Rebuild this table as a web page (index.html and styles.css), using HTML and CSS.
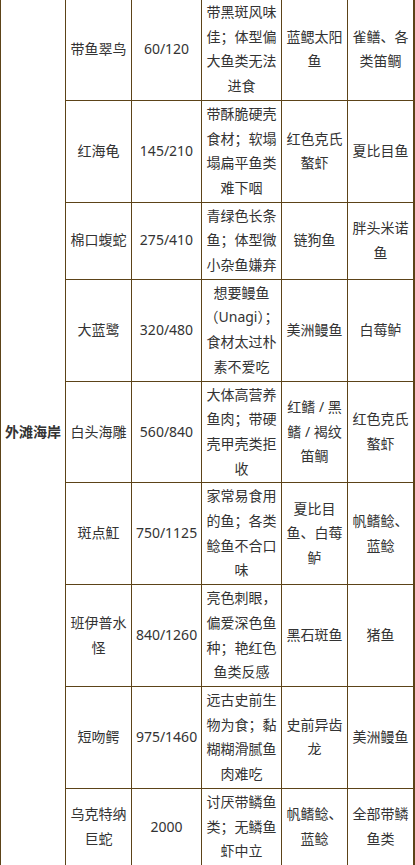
FILE: index.html
```html
<!DOCTYPE html>
<html lang="zh-CN">
<head>
<meta charset="utf-8">
<title>外滩海岸</title>
<link rel="stylesheet" href="styles.css">
</head>
<body>
<div class="table">
  <div class="cell region">外滩海岸</div>

  <div class="cell">带鱼翠鸟</div>
  <div class="cell">60/120</div>
  <div class="cell desc">带黑斑风味佳；体型偏大鱼类无法进食</div>
  <div class="cell">蓝鳃太阳鱼</div>
  <div class="cell last">雀鳝、各类笛鲷</div>

  <div class="cell">红海龟</div>
  <div class="cell">145/210</div>
  <div class="cell desc">带酥脆硬壳食材；软塌塌扁平鱼类难下咽</div>
  <div class="cell">红色克氏螯虾</div>
  <div class="cell last">夏比目鱼</div>

  <div class="cell">棉口蝮蛇</div>
  <div class="cell">275/410</div>
  <div class="cell desc">青绿色长条鱼；体型微小杂鱼嫌弃</div>
  <div class="cell">链狗鱼</div>
  <div class="cell last">胖头米诺鱼</div>

  <div class="cell">大蓝鹭</div>
  <div class="cell">320/480</div>
  <div class="cell desc">想要鳗鱼（Unagi）；食材太过朴素不爱吃</div>
  <div class="cell">美洲鳗鱼</div>
  <div class="cell last">白莓鲈</div>

  <div class="cell">白头海雕</div>
  <div class="cell">560/840</div>
  <div class="cell desc">大体高营养鱼肉；带硬壳甲壳类拒收</div>
  <div class="cell">红鳍 / 黑鳍 / 褐纹笛鲷</div>
  <div class="cell last">红色克氏螯虾</div>

  <div class="cell">斑点魟</div>
  <div class="cell">750/1125</div>
  <div class="cell desc">家常易食用的鱼；各类鲶鱼不合口味</div>
  <div class="cell">夏比目鱼、白莓鲈</div>
  <div class="cell last">帆鳍鲶、蓝鲶</div>

  <div class="cell">班伊普水怪</div>
  <div class="cell">840/1260</div>
  <div class="cell desc">亮色刺眼，偏爱深色鱼种；艳红色鱼类反感</div>
  <div class="cell">黑石斑鱼</div>
  <div class="cell last">猪鱼</div>

  <div class="cell">短吻鳄</div>
  <div class="cell">975/1460</div>
  <div class="cell desc">远古史前生物为食；黏糊糊滑腻鱼肉难吃</div>
  <div class="cell">史前异齿龙</div>
  <div class="cell last">美洲鳗鱼</div>

  <div class="cell">乌克特纳巨蛇</div>
  <div class="cell">2000</div>
  <div class="cell desc">讨厌带鳞鱼类；无鳞鱼虾中立</div>
  <div class="cell">帆鳍鲶、蓝鲶</div>
  <div class="cell last">全部带鳞鱼类</div>
</div>
</body>
</html>
```
FILE: styles.css
```css
html, body {
  margin: 0;
  padding: 0;
  background: #ffffff;
}

body {
  width: 415px;
  height: 865px;
  overflow: hidden;
  font-family: "Noto Sans", "Noto Sans CJK SC", sans-serif;
  font-size: 14px;
  color: #333333;
}

.table {
  display: grid;
  grid-template-columns: 65px 66px 70px 80px 66px 65px;
  margin-top: -1px;
  border-left: 1px solid #5c4318;
  border-right: 2px solid #5c4318;
  width: 415px;
  box-sizing: border-box;
}

.cell {
  box-sizing: border-box;
  display: flex;
  flex-direction: column;
  justify-content: center;
  align-items: center;
  text-align: center;
  padding: 1px 4px;
  line-height: 24.7px;
  border-right: 1px solid #5c4318;
  border-bottom: 1px solid #5c4318;
  word-break: normal;
}

.cell.last {
  border-right: none;
}

.cell.desc {
  padding: 1px 3px;
}

.region {
  grid-row: 1 / span 9;
  font-weight: bold;
  padding: 1px 2px;
}
```
